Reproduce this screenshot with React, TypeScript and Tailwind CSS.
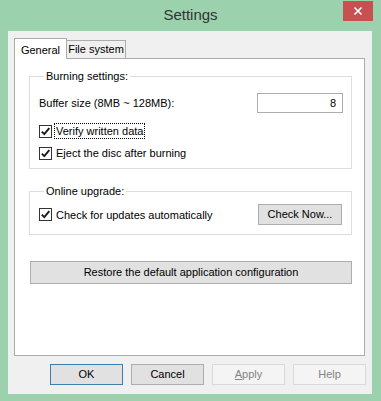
import React from 'react';

const FONT = { fontFamily: '"Segoe UI", "Liberation Sans", Arial, sans-serif' };

function CheckBox({ checked }: { checked: boolean }) {
  return (
    <span className="w-[13px] h-[13px] border border-[#333333] bg-white flex items-center justify-center shrink-0">
      {checked && (
        <svg width="11" height="11" viewBox="0 0 11 11">
          <path d="M1.8 5.6 L4.3 8.2 L9.3 2.2" fill="none" stroke="#1a1a1a" strokeWidth="1.9" />
        </svg>
      )}
    </span>
  );
}

function Check({ label, checked = true, focused = false }: { label: string; checked?: boolean; focused?: boolean }) {
  return (
    <div className="flex items-center h-[16px]">
      <CheckBox checked={checked} />
      <span
        className={`ml-[2px] px-px leading-[14px] border whitespace-nowrap ${focused ? 'border-dotted border-black' : 'border-transparent'}`}
      >
        {label}
      </span>
    </div>
  );
}

function Button({ children, kind = 'normal', className = '' }: { children: React.ReactNode; kind?: 'normal' | 'default' | 'disabled'; className?: string }) {
  const styles = {
    normal: 'bg-[#e1e1e1] border-[#adadad] text-black',
    default: 'bg-[#e1e1e1] border-[#3c7fb1] text-black',
    disabled: 'bg-[#f4f4f4] border-[#d9d9d9] text-[#838383]',
  };
  return (
    <button className={`h-[21px] border flex items-center justify-center text-[11px] whitespace-nowrap ${styles[kind]} ${className}`}>
      {children}
    </button>
  );
}

function GroupBox({ title, children, className = '' }: { title: string; children: React.ReactNode; className?: string }) {
  return (
    <fieldset className={`border border-[#dcdcdc] pl-[9px] pr-[8px] ${className}`}>
      <legend className="ml-[5px] px-[2px] leading-[16px]">{title}</legend>
      {children}
    </fieldset>
  );
}

export default function App() {
  return (
    <div className="w-[381px] h-[401px] bg-[#9bd1ad] flex flex-col text-[11px] text-black" style={FONT}>
      <div className="h-[31px] grid grid-cols-[1fr_auto_1fr]">
        <div />
        <div className="text-[15px] text-[#333333] pt-[5px] leading-[20px]">Settings</div>
        <div className="flex justify-end items-start pt-px pr-[8px]">
          <div className="w-[30px] h-[20px] bg-[#c75050] flex items-center justify-center">
            <svg width="10" height="10" viewBox="0 0 10 10">
              <path d="M1.5 1.5 L8.5 8.5 M8.5 1.5 L1.5 8.5" stroke="white" strokeWidth="1.6" />
            </svg>
          </div>
        </div>
      </div>

      <div className="ml-[8px] w-[364px] h-[363px] bg-[#f0f0f0] flex flex-col px-[6px] pt-[7px]">
        <div className="flex items-end h-[20px]">
          <div className="relative z-10 w-[53px] h-[21px] -mb-px bg-white border border-b-0 border-[#acacac] flex items-start justify-center pt-[3px] whitespace-nowrap">
            General
          </div>
          <div className="-ml-px w-[60px] h-[18px] bg-[#f0f0f0] border border-b-0 border-[#acacac] flex items-center justify-center whitespace-nowrap">
            File system
          </div>
        </div>

        <div className="w-[351px] h-[298px] bg-white border border-[#acacac] pl-[14px] pr-[12px] pt-[9px]">
          <GroupBox title="Burning settings:" className="pb-[7px]">
            <div className="mt-[9px] h-[20px] flex items-center justify-between">
              <span>Buffer size (8MB ~ 128MB):</span>
              <div className="w-[86px] h-[20px] border border-[#abadb3] bg-white flex items-center justify-end pr-[6px]">8</div>
            </div>
            <div className="mt-[10px]">
              <Check label="Verify written data" focused />
            </div>
            <div className="mt-[6px]">
              <Check label="Eject the disc after burning" />
            </div>
          </GroupBox>

          <GroupBox title="Online upgrade:" className="mt-[14px] pb-[9px]">
            <div className="mt-[5px] h-[21px] flex items-center justify-between pr-px">
              <Check label="Check for updates automatically" />
              <Button className="w-[84px]">Check Now...</Button>
            </div>
          </GroupBox>

          <Button className="mt-[26px] ml-px w-[322px] !h-[23px]">Restore the default application configuration</Button>
        </div>

        <div className="mt-[8px] flex justify-end gap-2">
          <Button kind="default" className="w-[73px]">OK</Button>
          <Button className="w-[73px]">Cancel</Button>
          <Button kind="disabled" className="w-[73px]"><span><span className="underline">A</span>pply</span></Button>
          <Button kind="disabled" className="w-[73px]">Help</Button>
        </div>
      </div>
    </div>
  );
}
